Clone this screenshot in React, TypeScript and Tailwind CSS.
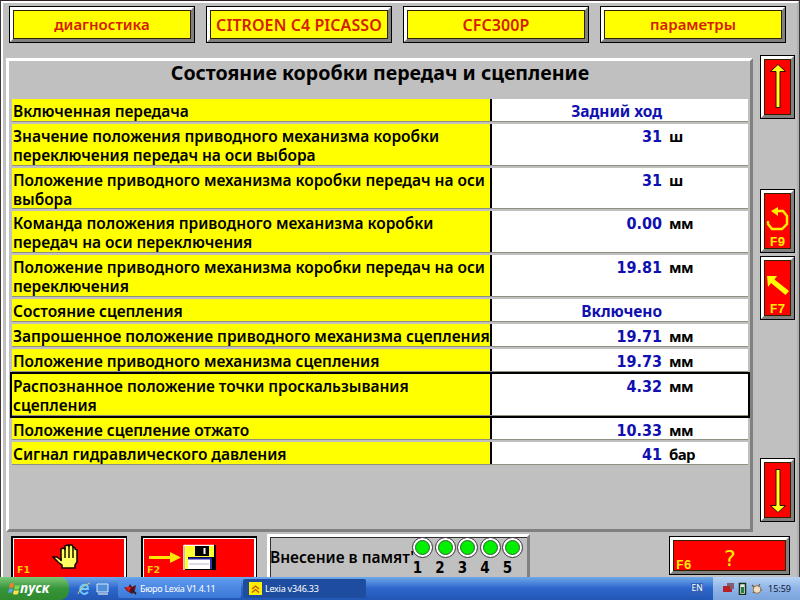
import React from 'react'
import { clsx } from 'clsx'

type Row = { label: string[]; value: string; unit?: string; selected?: boolean }

const TABS = ['диагностика', 'CITROEN C4 PICASSO', 'CFC300P', 'параметры']

const ROWS: Row[] = [
  { label: ['Включенная передача'], value: 'Задний ход' },
  { label: ['Значение положения приводного механизма коробки', 'переключения передач на оси выбора'], value: '31', unit: 'ш' },
  { label: ['Положение приводного механизма коробки передач на оси', 'выбора'], value: '31', unit: 'ш' },
  { label: ['Команда положения приводного механизма коробки', 'передач на оси переключения'], value: '0.00', unit: 'мм' },
  { label: ['Положение приводного механизма коробки передач на оси', 'переключения'], value: '19.81', unit: 'мм' },
  { label: ['Состояние сцепления'], value: 'Включено' },
  { label: ['Запрошенное положение приводного механизма сцепления'], value: '19.71', unit: 'мм' },
  { label: ['Положение приводного механизма сцепления'], value: '19.73', unit: 'мм' },
  { label: ['Распознанное положение точки проскальзывания', 'сцепления'], value: '4.32', unit: 'мм', selected: true },
  { label: ['Положение сцепление отжато'], value: '10.33', unit: 'мм' },
  { label: ['Сигнал гидравлического давления'], value: '41', unit: 'бар' },
]

export default function App() {
  return (
    <div className="flex h-[600px] w-[800px] flex-col overflow-hidden bg-[#c0c0c0] font-['Noto_Sans',sans-serif] font-bold text-black">
      <div className="flex h-[577px] flex-col overflow-hidden border-t border-r border-l border-t-[#302028] border-r-[#403838] border-l-[#403838]">
        <div className="flex h-[576px] flex-col border-t-2 border-r-2 border-l-2 border-t-white border-r-[#b0b0b0] border-l-white">
          {/* Breadcrumb buttons */}
          <div className="flex h-[55px] shrink-0 gap-[11px] pt-[3px] pl-[6px]">
            {TABS.map((tab, i) => (
              <Bevel key={tab} className="h-[37px] w-[186px]" face="bg-[#ffff00]">
                <span
                  className={clsx(
                    'leading-none font-semibold whitespace-nowrap text-[#d42000]',
                    i === 1 || i === 2 ? 'text-[16px] tracking-[0.08px]' : 'text-[15px]',
                  )}
                >
                  {tab}
                </span>
              </Bevel>
            ))}
          </div>

          <div className="flex h-[474px] shrink-0 pl-[3px]">
            <Measurements />
            {/* Side buttons */}
            <div className="-mt-[3px] ml-[7px] flex flex-col">
              <Bevel className="h-[64px] w-[35px]" face="bg-[#ff0000]">
                <Arrow />
              </Bevel>
              <Bevel className="mt-[70px] h-[64px] w-[35px]" face="bg-[#ff0000]">
                <SideKey label="F9">
                  <path d="M2 14v3l4 5h10l5-5V9l-4-5H9" fill="none" stroke="#ffee00" strokeWidth="2.400" />
                  <path d="M5 4l7-4v9z" fill="#ffee00" />
                </SideKey>
              </Bevel>
              <Bevel className="mt-[3px] h-[64px] w-[35px]" face="bg-[#ff0000]">
                <SideKey label="F7">
                  <path d="M1 2h10L8.500 5.500 23 17l-3.500 4L5 9l-3 4z" fill="#ffff00" />
                </SideKey>
              </Bevel>
              <Bevel className="mt-[138px] h-[64px] w-[35px]" face="bg-[#ff0000]">
                <Arrow down />
              </Bevel>
            </div>
          </div>

          {/* Function keys */}
          <div className="flex h-[45px] shrink-0 pl-[8px]">
            <FunctionKey label="F1" className="mt-[4px] w-[116px]">
              <Hand />
            </FunctionKey>
            <FunctionKey label="F2" className="mt-[4px] ml-[14px] w-[116px]">
              <SaveIcon />
            </FunctionKey>
            <div className="mt-[2px] ml-[10px] flex w-[263px] border-t-[3px] border-r-[3px] border-l-[3px] border-t-white border-r-[#808080] border-l-white">
              <div className="flex w-full border-t border-l border-[#303030]">
                <span className="mt-[10px] -ml-[1px] h-[20px] w-[142px] shrink-0 text-[15.500px] leading-[18px] font-semibold whitespace-nowrap">
                  Внесение в памят'
                </span>
                <div className="-mt-px flex gap-[1.500px]">
                  {[1, 2, 3, 4, 5].map(n => (
                    <div key={n} className="flex w-[21px] flex-col items-center">
                      <span className="size-[21px] shrink-0 rounded-full border border-[#333] bg-white p-[2px]">
                        <span className="block size-full rounded-full border border-[#306030] bg-[#00f000]" />
                      </span>
                      <span className="mt-px mr-[10px] font-['DejaVu_Sans_Condensed','DejaVu_Sans',sans-serif] text-[15px] leading-[19px]">{n}</span>
                    </div>
                  ))}
                </div>
              </div>
            </div>
            <Bevel className="mt-[4px] ml-[139px] h-[39px] w-[121px]" face="bg-[#ff0000]">
              <div className="relative flex size-full items-center justify-center text-[#ffee00]">
                <span className="mt-[6px] font-['DejaVu_Sans_Mono',monospace] text-[22px] leading-none font-normal">?</span>
                <span className="absolute -bottom-px left-[2px] font-['Liberation_Mono',monospace] text-[13px] leading-[10px]">F6</span>
              </div>
            </Bevel>
          </div>
        </div>
      </div>
      <Taskbar />
    </div>
  )
}

function Measurements() {
  return (
    <div className="w-[747px] border-[3px] border-t-white border-r-[#808080] border-b-[#808080] border-l-white pl-[3px]">
      <h1 className="h-[38px] pr-[2px] text-center text-[19.600px] leading-[24px] whitespace-nowrap">
        Состояние коробки передач и сцепление
      </h1>
      {ROWS.map((row, i) => (
        <div key={i} className={clsx('relative w-[736px]', row.label.length > 1 ? 'h-[43.800px]' : 'h-[24.900px]')}>
          <div className="flex h-[calc(100%-2px)] border-b border-[#909080] text-[15.500px] leading-[19px] font-semibold tracking-[-0.03px] whitespace-nowrap">
            <div className="w-[480px] border-r-2 border-black bg-[#ffff00] pt-[3px] pl-[1px]">
              {row.label.map(line => (
                <div key={line} className="h-[19px]">
                  {line}
                </div>
              ))}
            </div>
            <div className="flex flex-1 bg-white pt-[3px]">
              <span
                className={clsx(
                  'w-[170px] text-right text-[#1010b0]',
                  row.unit
                    ? "font-['DejaVu_Sans_Condensed','DejaVu_Sans',sans-serif] text-[16px] font-bold tracking-normal"
                    : 'font-bold tracking-[-0.05px]',
                )}
              >
                {row.value}
              </span>
              <span className="ml-[7px] text-[15px] font-bold tracking-[-0.600px]">{row.unit}</span>
            </div>
          </div>
          {row.selected && <div className="absolute -inset-x-[2px] -top-[2px] bottom-0 border-[2px] border-black" />}
        </div>
      ))}
    </div>
  )
}

function Bevel({ className, face, children }: { className: string; face: string; children: React.ReactNode }) {
  return (
    <div className={clsx('shrink-0 border border-black', className)}>
      <div className="size-full border-[3px] border-t-white border-r-[#808080] border-b-[#808080] border-l-white">
        <div className={clsx('flex size-full items-center justify-center border border-[#302000]', face)}>{children}</div>
      </div>
    </div>
  )
}

function Arrow({ down = false }: { down?: boolean }) {
  return (
    <svg className={clsx('h-[48px] w-[18px]', down && 'rotate-180')} viewBox="0 0 18 48">
      <path d="M9 1.500L1.500 8.500H7v36h4V8.500h5.500z" fill="#ffff20" stroke="#301000" strokeWidth="1" />
    </svg>
  )
}

function SideKey({ label, children }: { label: string; children: React.ReactNode }) {
  return (
    <div className="flex size-full flex-col items-center justify-between pt-[13px] text-[#ffee00]">
      <svg className="h-[24px] w-[24px]" viewBox="0 0 24 24">
        {children}
      </svg>
      <span className="font-['Liberation_Mono',monospace] text-[13px] leading-[10px]">{label}</span>
    </div>
  )
}

function FunctionKey({ label, className, children }: { label: string; className: string; children: React.ReactNode }) {
  return (
    <div className={clsx('shrink-0 border-t-2 border-r border-l-2 border-black', className)}>
      <div className="relative flex h-full justify-center border-t border-r-2 border-l border-white bg-[#ff0000]">
        {children}
        <span className="absolute bottom-[2px] left-[3px] font-['DejaVu_Sans',sans-serif] text-[9.500px] leading-[10px] text-[#ffcc00]">
          {label}
        </span>
      </div>
    </div>
  )
}

function Hand() {
  return (
    <svg className="mt-[5px] -ml-[8px] h-[26px] w-[27px]" viewBox="0 0 27 26">
      <path
        d="M1 13h4l4 3V5l2-1 2 1V2l2-1 2 1V1h3l1 2 2 1V5l2 1v12l-2 3v3H10v-3l-4-3z"
        fill="#ffff60"
        stroke="#100000"
        strokeWidth="1.500"
      />
      <path d="M13 4v10M17 2v12M21 3v11M9 14v3" stroke="#100000" strokeWidth="1.400" />
    </svg>
  )
}

function SaveIcon() {
  return (
    <svg className="mt-[5px] -ml-[32px] h-[27px] w-[70px]" viewBox="0 0 70 27">
      <path d="M1 12h21V8l11 5.500L22 19v-4H1z" fill="#ffe800" />
      <path d="M36 1h32v25H36z" fill="#000" />
      <path d="M36 1v25M36 1.500h30" stroke="#fff" strokeWidth="1.500" />
      <path d="M37 2h29v11H37zM37 13h3v12h-3z" fill="#ffff30" />
      <path d="M47 2h14v10H47z" fill="#000" />
      <path d="M55.500 4h2v6h-2z" fill="#fff" />
      <path d="M40 14h24v11H40z" fill="#fff" />
      <path d="M40 14.500h24M63 15v10" stroke="#2020a0" strokeWidth="1.800" />
      <path d="M41 20h20" stroke="#b8b8c8" />
    </svg>
  )
}

function Taskbar() {
  return (
    <div className="flex h-[23px] shrink-0 items-stretch bg-linear-to-b from-[#6fa8e8] via-[#2d66cc] to-[#2256b4] font-['Noto_Sans',sans-serif] font-normal text-white">
      <div className="flex w-[69px] items-center rounded-r-[9px] bg-linear-to-b from-[#7cc878] via-[#35953a] to-[#2f8a2c] pl-[8px]">
        <svg className="h-[14px] w-[13px] shrink-0" viewBox="0 0 13 14">
          <path d="M2 2q2-2 4 0L5 6Q3 5 1 6z" fill="#f08030" />
          <path d="M7 3q2 1 5 0l-1 4q-3 1-5 0z" fill="#80d850" />
          <path d="M1 7q2-1 4 0l-1 4q-2-1-4 0z" fill="#60a0f0" />
          <path d="M6 8q2 1 5 0l-1 4q-3 1-5 0z" fill="#ffe050" />
        </svg>
        <span className="-ml-[1px] font-['Open_Sans',sans-serif] text-[13.500px] leading-none font-bold italic">пуск</span>
      </div>
      <div className="flex w-[49px] items-center gap-[5px] pl-[8px]">
        <svg className="h-[14px] w-[14px]" viewBox="0 0 14 14">
          <path d="M11 10q-4 4-7 0-2-5 2-7 5-1 5 4H4" fill="none" stroke="#70c8ff" strokeWidth="2" />
          <path d="M1 12Q3 5 13 1" fill="none" stroke="#e0d060" strokeWidth="1" />
        </svg>
        <svg className="h-[12px] w-[13px]" viewBox="0 0 13 12">
          <path d="M1 1h11v8H1z" fill="#5090d8" stroke="#d8e8f8" />
          <path d="M2 11h10" stroke="#c0d0e0" strokeWidth="1.500" />
        </svg>
      </div>
      <div className="my-[2px] flex w-[123px] items-center rounded-[2px] bg-linear-to-b from-[#5b97ec] to-[#3b78d8] pl-[6px]">
        <svg className="h-[12px] w-[13px] shrink-0" viewBox="0 0 13 12">
          <path d="M0 4l4 1 2-4 2 3 4-2-1 5-3 4-5-3z" fill="#601018" />
          <path d="M1 4l4 5 2-5z" fill="#e02020" />
          <path d="M8 7l4 4" stroke="#222" strokeWidth="2" />
        </svg>
        <span className="ml-[3px] text-[9px] leading-none tracking-[-0.3px] whitespace-nowrap">Бюро Lexia V1.4.11</span>
      </div>
      <div className="my-[2px] ml-[2px] flex w-[123px] items-center rounded-[2px] bg-[#1e4c9e] pl-[6px]">
        <svg className="h-[13px] w-[13px] shrink-0" viewBox="0 0 13 13">
          <path d="M0 0h13v13H0z" fill="#ffee00" />
          <path d="M3 7l3.500-3L10 7M3 10.500l3.500-3 3.500 3" fill="none" stroke="#c05010" strokeWidth="1.300" />
        </svg>
        <span className="ml-[3px] text-[9px] leading-none tracking-[-0.25px] whitespace-nowrap">Lexia v346.33</span>
      </div>
      <div className="ml-auto flex w-[109px] items-center">
        <span className="flex h-[12px] w-[12px] items-center justify-center bg-[#3160b8] text-[8.500px] leading-none">EN</span>
      </div>
      <div className="-ml-[87px] flex w-[87px] items-center bg-linear-to-b from-[#b8d4f4] via-[#8fb4e8] to-[#7aa4dc] pl-[9px] text-[#101830]">
        <svg className="h-[13px] w-[41px] shrink-0" viewBox="0 0 41 13">
          <path d="M5 1h7v6H5z" fill="#806070" />
          <path d="M1 4h7v6H1zM6 7h4v3H6z" fill="#b82028" />
          <path d="M17.500 1.500h6v11h-6z" fill="#e8f0e8" stroke="#183018" strokeWidth="1.500" />
          <path d="M19 5h3v6h-3z" fill="#208040" />
          <path d="M30 3l4 4 4-5M31 11l3-4 6 1" fill="none" stroke="#705030" strokeWidth="1.200" />
          <circle cx="35" cy="7.500" r="3.800" fill="#f0e0c0" stroke="#907050" />
        </svg>
        <span className="ml-[5px] text-[9px] leading-none">15:59</span>
      </div>
    </div>
  )
}
